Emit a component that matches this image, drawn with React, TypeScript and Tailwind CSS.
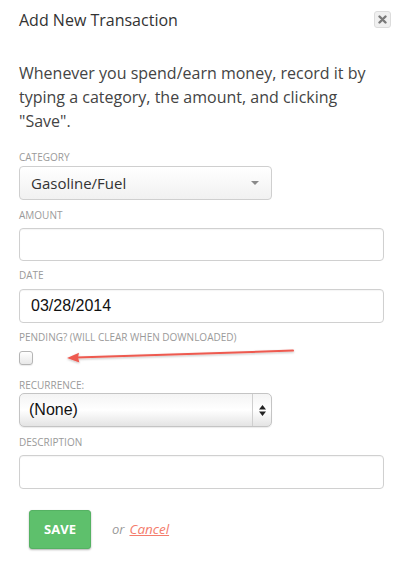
import React from "react";

const labelCls =
  "block text-[10px] leading-[12px] uppercase text-[#9a9a9a]";

export default function App() {
  return (
    <div
      className="relative w-[400px] h-[584px] bg-white overflow-hidden"
      style={{ fontFamily: '"Open Sans", sans-serif' }}
    >
      <div className="flex items-start justify-between pl-[19px] pr-[9px] pt-[10px]">
        <h1 className="text-[16px] leading-[20px] text-[#333]">Add New Transaction</h1>
        <button className="mt-[1px] w-[17px] h-[17px] flex items-center justify-center rounded-[3px] border border-[#dcdcdc] bg-[#f0f0f0]">
          <svg width="9" height="9" viewBox="0 0 9 9">
            <path d="M1.5 1.5 L7.5 7.5 M7.5 1.5 L1.5 7.5" stroke="#7a7a7a" strokeWidth="2.4" strokeLinecap="round" />
          </svg>
        </button>
      </div>

      <div className="px-[19px]">
        <p className="mt-[31px] text-[16px] leading-[24px] text-[#444]">
          Whenever you spend/earn money, record it by typing a category, the amount, and clicking "Save".
        </p>

        <label className={labelCls + " mt-[18px]"}>Category</label>
        <div className="mt-[3px] w-[253px] h-[34px] rounded-[4px] border border-[#cfcfcf] bg-gradient-to-b from-white to-[#f1f1f1] flex items-center justify-between pl-[11px] pr-[12px]">
          <span className="text-[15px] text-[#333]">Gasoline/Fuel</span>
          <svg width="8" height="4" viewBox="0 0 8 4">
            <path d="M0 0 L8 0 L4 4 Z" fill="#8a8a8a" />
          </svg>
        </div>

        <label className={labelCls + " mt-[9px]"}>Amount</label>
        <div className="mt-[7px] w-[365px] h-[33px] rounded-[4px] border border-[#d0d0d0] bg-white shadow-[inset_0_1px_1px_rgba(0,0,0,0.04)]" />

        <label className={labelCls + " mt-[8px]"}>Date</label>
        <div className="mt-[8px] w-[365px] h-[34px] rounded-[4px] border border-[#d0d0d0] bg-white flex items-center pl-[11px] shadow-[inset_0_1px_1px_rgba(0,0,0,0.04)]">
          <span className="text-[16px] text-[#111]" style={{ fontFamily: '"Liberation Sans", Arial, sans-serif' }}>
            03/28/2014
          </span>
        </div>

        <label className={labelCls + " mt-[8px]"}>Pending? (will clear when downloaded)</label>
        <div className="mt-[8px] w-[14px] h-[14px] rounded-[3px] border border-[#b5b5b5] bg-gradient-to-b from-white to-[#e8e8e8] shadow-[0_1px_1px_rgba(0,0,0,0.08)]" />

        <label className={labelCls + " mt-[14px]"}>Recurrence:</label>
        <div className="mt-[2px] w-[253px] h-[34px] rounded-[5px] border border-[#c4c4c4] bg-gradient-to-b from-[#f4f4f4] via-white to-[#e4e4e4] flex items-stretch shadow-[0_1px_1px_rgba(0,0,0,0.08)]">
          <div className="flex-1 flex items-center pl-[9px]">
            <span className="text-[16px] text-[#111]" style={{ fontFamily: '"Liberation Sans", Arial, sans-serif' }}>
              (None)
            </span>
          </div>
          <div className="w-[19px] border-l border-[#cfcfcf] flex items-center justify-center">
            <svg width="7" height="11" viewBox="0 0 7 11">
              <path d="M0 4.5 L3.5 0 L7 4.5 Z M0 6.5 L3.5 11 L7 6.5 Z" fill="#222" />
            </svg>
          </div>
        </div>

        <label className={labelCls + " mt-[9px]"}>Description</label>
        <div className="mt-[7px] w-[365px] h-[34px] rounded-[4px] border border-[#d0d0d0] bg-white shadow-[inset_0_1px_1px_rgba(0,0,0,0.04)]" />

        <div className="mt-[21px] flex items-center pl-[10px]">
          <button className="w-[62px] h-[39px] rounded-[3px] bg-[#5ec06c] border border-[#55b263] shadow-[0_1px_2px_rgba(0,0,0,0.3)] text-white font-bold text-[13px]">
            SAVE
          </button>
          <span className="ml-[21px] italic text-[13px] text-[#999]">or</span>
          <a className="ml-[5px] italic text-[13.5px] text-[#f47c6c] underline">Cancel</a>
        </div>
      </div>

      <svg className="absolute left-0 top-0 pointer-events-none" width="400" height="584">
        <defs>
          <filter id="sh" x="-10%" y="-50%" width="120%" height="200%">
            <feDropShadow dx="0" dy="1" stdDeviation="0.8" floodColor="#000" floodOpacity="0.25" />
          </filter>
        </defs>
        <g filter="url(#sh)">
          <path d="M76 357.6 L293 350.6" stroke="#ee5a50" strokeWidth="2" strokeLinecap="round" />
          <path d="M67 358 L79 352.8 L78 357.5 L79.4 362.6 Z" fill="#ee5a50" />
        </g>
      </svg>
    </div>
  );
}
